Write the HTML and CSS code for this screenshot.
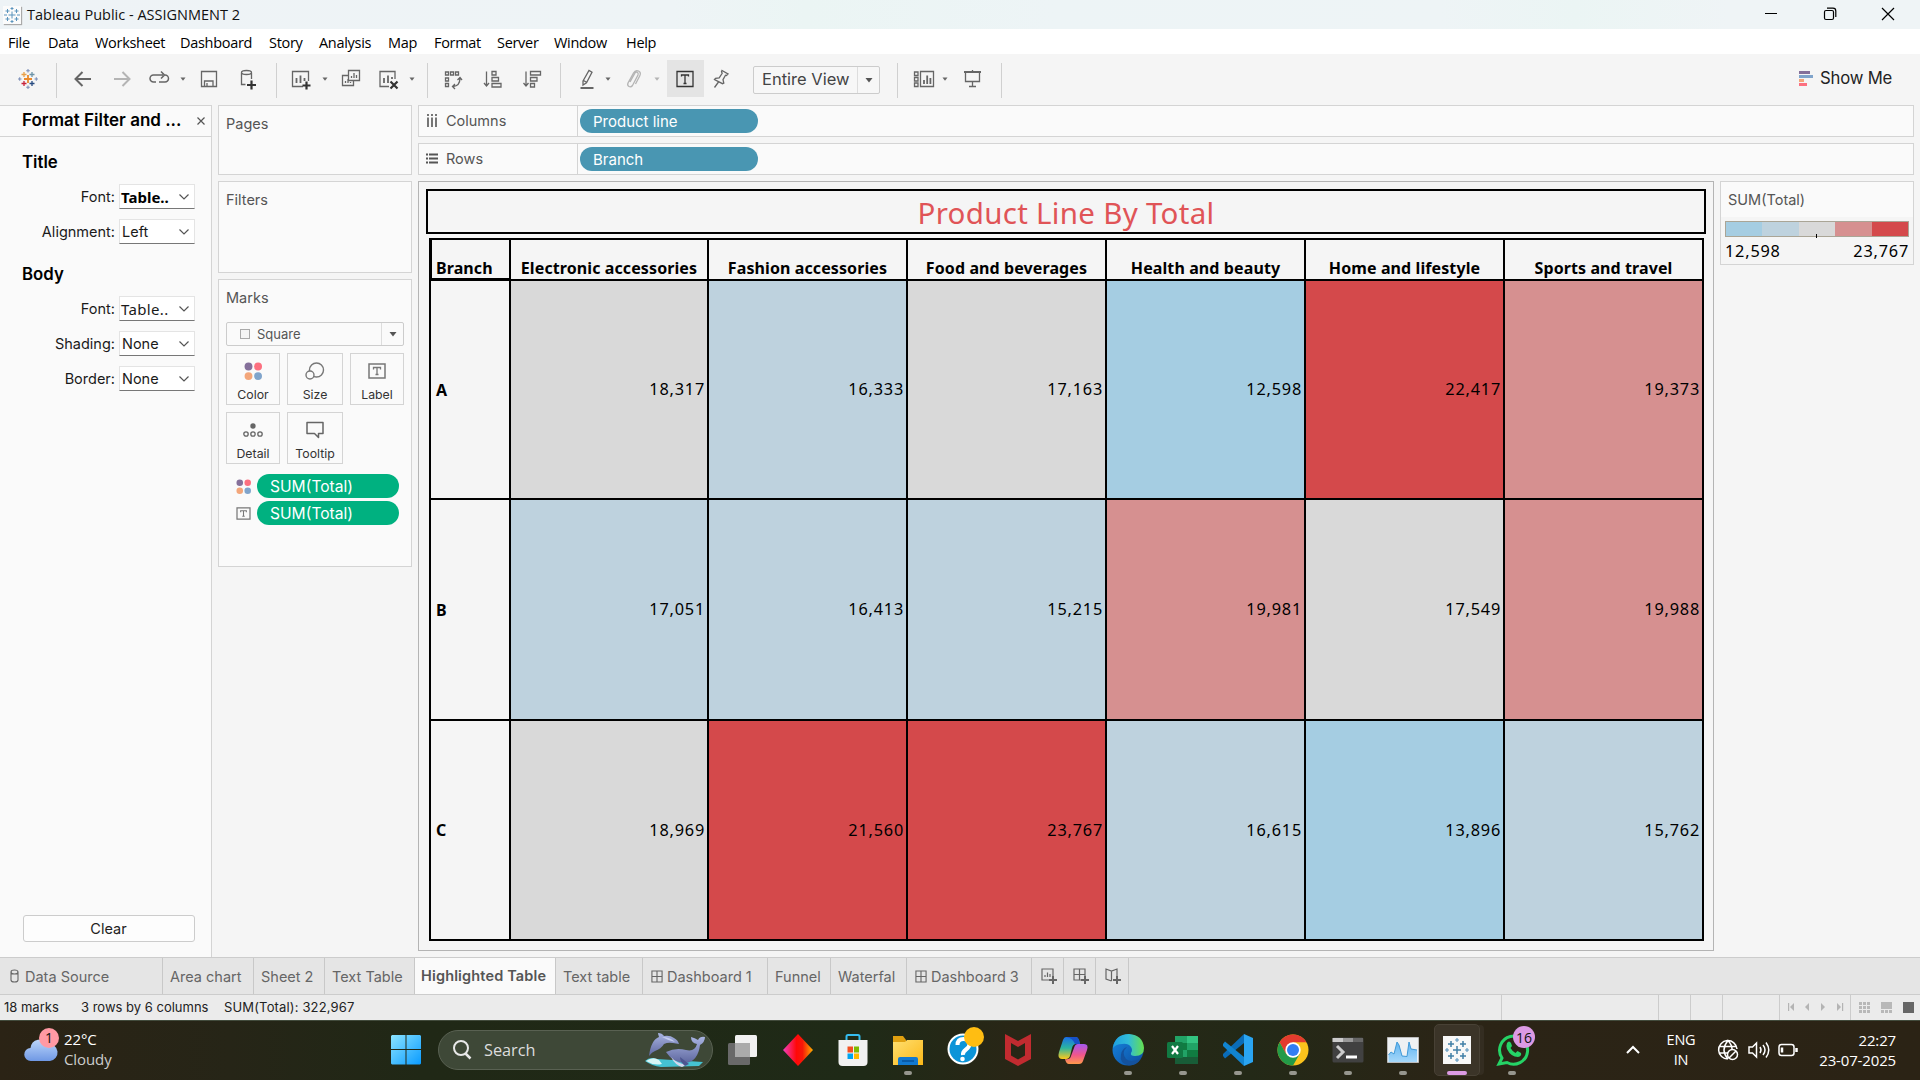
FILE: index.html
```html
<!DOCTYPE html>
<html lang="en">
<head>
<meta charset="utf-8">
<title>Tableau Public - ASSIGNMENT 2</title>
<link rel="stylesheet" href="styles.css">
</head>
<body>
<svg class="defs" aria-hidden="true">
  <defs>
    <linearGradient id="win" x1="0" y1="0" x2="1" y2="1"><stop offset="0" stop-color="#8be4ff"/><stop offset="1" stop-color="#0a9bff"/></linearGradient>
    <linearGradient id="cloud" x1="0" y1="0" x2="0" y2="1"><stop offset="0" stop-color="#bcd6fb"/><stop offset="1" stop-color="#6f98e4"/></linearGradient>
    <linearGradient id="diamond" x1="0" x2="1"><stop offset="0" stop-color="#ef3fc0"/><stop offset=".45" stop-color="#ff0808"/><stop offset=".65" stop-color="#f81808"/><stop offset="1" stop-color="#ffb000"/></linearGradient>
    <linearGradient id="folder" x1="0" y1="0" x2="1" y2="1"><stop offset="0" stop-color="#ffdf70"/><stop offset="1" stop-color="#fbb818"/></linearGradient>
    <linearGradient id="cpa" x1="0" y1="0" x2="0" y2="1"><stop offset="0" stop-color="#1a6fe8"/><stop offset=".5" stop-color="#2bb5a0"/><stop offset="1" stop-color="#ffc91a"/></linearGradient>
    <linearGradient id="cpb" x1="0" y1="0" x2="0" y2="1"><stop offset="0" stop-color="#a558f0"/><stop offset=".55" stop-color="#f0568c"/><stop offset="1" stop-color="#ff9a4a"/></linearGradient>
    <linearGradient id="edgea" x1="0" y1="0" x2="1" y2="0"><stop offset="0" stop-color="#1e9fe0"/><stop offset=".5" stop-color="#31bcd8"/><stop offset="1" stop-color="#66e04e"/></linearGradient>
    <linearGradient id="edgeb" x1="0" y1="0" x2="1" y2="1"><stop offset="0" stop-color="#1686e0"/><stop offset="1" stop-color="#0d4c9e"/></linearGradient>
    <linearGradient id="area" x1="0" y1="0" x2="0" y2="1"><stop offset="0" stop-color="#5fb4f0"/><stop offset="1" stop-color="#a6d8fa"/></linearGradient>
    <linearGradient id="dolphin" x1="0" y1="0" x2="0" y2="1"><stop offset="0" stop-color="#a9b4e2"/><stop offset="1" stop-color="#5e679f"/></linearGradient>
    <symbol id="caret" viewBox="0 0 8 24"><path d="M1.5 10.5h5L4 13.8z" fill="#666"/></symbol>
    <symbol id="chev" viewBox="0 0 12 12"><path d="M1.5 3.5 6 8l4.500-4.500" fill="none" stroke="#555" stroke-width="1.2"/></symbol>
    <symbol id="dots" viewBox="0 0 16 16"><circle cx="4" cy="4" r="3.500" fill="#85709a"/><circle cx="12.500" cy="4" r="3.500" fill="#fc7080"/><circle cx="4" cy="12.500" r="3.500" fill="#f3a67a"/><circle cx="12.500" cy="12.500" r="3.500" fill="#80a4cb"/></symbol>
    <symbol id="tbox" viewBox="0 0 18 16"><path d="M1 1h16v14H1z" fill="none" stroke="#777" stroke-width="1.500"/><path d="M5.500 6.500V4.500h7v2M9 4.500v7M7.500 11.500h3" fill="none" stroke="#777" stroke-width="1.300"/></symbol>
    <symbol id="grid4" viewBox="0 0 13 14"><path d="M1 1h11v12H1zM6.500 1v12M1 7h11" fill="none" stroke="#666" stroke-width="1.200"/></symbol>
  </defs>
</svg>

<header class="titlebar">
  <svg class="app-icon" width="18" height="18" viewBox="0 0 18 18"><rect width="18" height="18" fill="#fbfbfb"/><path d="M9 5.500v7M5.500 9h7M4.500 3v4M2.500 5h4M13.500 3v4M11.500 5h4M4.500 11v4M2.500 13h4M13.500 11v4M11.500 13h4M9 1v3M7.500 2.500h3M9 14v3M7.500 15.500h3M1 9h3M14 9h3" stroke="#5a94bd" fill="none"/></svg>
  <span class="app-title">Tableau Public - ASSIGNMENT 2</span>
  <div class="win-controls">
    <svg width="14" height="14" viewBox="0 0 14 14"><path d="M1 6.500h12" stroke="#000"/></svg>
    <svg width="14" height="14" viewBox="0 0 14 14"><rect x="1.500" y="3.500" width="9" height="9" rx="1.500" fill="none" stroke="#000" stroke-width="1.200"/><path d="M4 1.200h6q2.800 0 2.800 2.800v6" fill="none" stroke="#000" stroke-width="1.200"/></svg>
    <svg width="14" height="14" viewBox="0 0 14 14"><path d="M1 1l12 12M13 1 1 13" stroke="#000" stroke-width="1.200"/></svg>
  </div>
</header>

<nav class="menubar"><span>File</span><span>Data</span><span>Worksheet</span><span>Dashboard</span><span>Story</span><span>Analysis</span><span>Map</span><span>Format</span><span>Server</span><span>Window</span><span>Help</span></nav>

<div class="toolbar">
  <svg class="i" viewBox="0 0 24 24" fill="none" stroke-width="1.400"><path d="M12 8v8M8 12h8" stroke="#eb8a2c" stroke-width="1.800"/><path d="M8 5v5M5.500 7.500h5" stroke="#e8a04a"/><path d="M16 5v5M13.500 7.500h5" stroke="#6b93a8"/><path d="M8 14v5M5.500 16.500h5" stroke="#c8243c"/><path d="M16 14v5M13.500 16.500h5" stroke="#274a80"/><path d="M12 2v3.500M10.200 3.700h3.600M12 18.500V22M10.200 20.300h3.600M20.300 10.200v3.600M18.500 12H22M3.700 10.200v3.600M2 12h3.500" stroke="#7c8fb8" stroke-width="1.100"/></svg>
  <i class="sep"></i>
  <svg class="i" viewBox="0 0 24 24"><path d="M20 12H5M11.500 5 4.500 12l7 7" stroke-width="2"/></svg>
  <svg class="i faded" viewBox="0 0 24 24"><path d="M4 12h15M12.500 5l7 7-7 7" stroke-width="2"/></svg>
  <svg class="i" viewBox="0 0 24 24"><path d="M9 15H6.500a3.500 3.500 0 0 1 0-7H16M14 4.500 17.500 8 14 11.500M17.500 8h.5a3.500 3.500 0 0 1 0 7h-6" stroke-width="1.500"/></svg>
  <svg class="c"><use href="#caret"/></svg>
  <svg class="i" viewBox="0 0 24 24"><path d="M4.500 4.500h15v15h-15zM7.500 19v-5h8.500v5M10 19v-3"/></svg>
  <svg class="i" viewBox="0 0 24 24"><path d="M6.500 6v11.500h4M16.500 6v6"/><ellipse cx="11.500" cy="5.500" rx="5" ry="2"/><path d="M16.500 13.500v9M12 18h9" stroke="#333" stroke-width="2.200"/></svg>
  <i class="sep"></i>
  <svg class="i" viewBox="0 0 24 24"><path d="M14 19.500H3.500v-15h16V14"/><path d="M7.500 16v-5M11.500 16V8.500M15.500 14v-3" stroke-width="1.800"/><path d="M17.500 14.500v8M13.500 18.500h8" stroke="#333" stroke-width="2.200"/></svg>
  <svg class="c"><use href="#caret"/></svg>
  <svg class="i" viewBox="0 0 24 24"><path d="M9.500 3.500h11v10h-11zM9 8.500H3.500v10h11V14M12.500 11V9M15 11V6M17.500 11V8M6.500 16v-2M9 16v-4M11.500 16v-1"/></svg>
  <svg class="i" viewBox="0 0 24 24"><path d="M12 19.500H3v-15h15V12"/><path d="M7 16v-5M11 16V8.500M15 12v-2" stroke-width="1.800"/><path d="m13.500 14.500 7 7M20.500 14.500l-7 7" stroke="#333" stroke-width="2.200"/></svg>
  <svg class="c"><use href="#caret"/></svg>
  <i class="sep"></i>
  <svg class="i" viewBox="0 0 24 24"><path d="M4.500 5h3v3h-3zM9.500 5h3v3h-3zM14.500 5h3v3h-3zM4.500 11h3v3h-3zM4.500 16.500h3v3h-3zM19 11q0 8-7 8.500M16.500 13l2.500-2.500 2 2.500M14 17l-2.500 2.500L14 22"/></svg>
  <svg class="i" viewBox="0 0 24 24"><path d="M6.500 4.500V19M4 16l2.500 3L9 16M12 4.500h4V8h-4zM12 10.500h6.500V14H12zM12 16.500h9v3.500h-9z"/></svg>
  <svg class="i" viewBox="0 0 24 24"><path d="M6 4.500V19M3.500 16 6 19l2.500-3M10.500 4.500h10V8h-10zM10.500 10.500H17V14h-6.500zM10.500 16.500h4V20h-4z"/></svg>
  <i class="sep"></i>
  <svg class="i" viewBox="0 0 24 24"><path d="m8 14 6-10.500 3 1.800-5.500 10.500L8 18zM8.500 13.500l3 1.800"/><path d="M5.500 21h13" stroke-width="2"/></svg>
  <svg class="c"><use href="#caret"/></svg>
  <svg class="i faded" viewBox="0 0 24 24"><path d="m9 15 5-9q1-1.500 2.300-.8T17 8l-5.500 10.500q-1.500 2-3.500 1t-1-3.500L12.500 6q2-3.500 5-2t1.200 5L14.500 17"/></svg>
  <svg class="c faded"><use href="#caret"/></svg>
  <span class="pressed"><svg class="i dark" viewBox="0 0 24 24"><path d="M4 4.500h16v15H4zM8.500 9.500V8h7v1.500M12 8v8.500M10.500 16.500h3"/></svg></span>
  <svg class="i" viewBox="0 0 24 24"><path d="m13 3.500 6 3.500-1.500 1.500-1-.3-2.500 4.500.8 3.500-1.300.5L5.500 12.500l1-1.200 3.700-.5 3-4.500-.7-1.500zM9.500 15 5.500 20.500"/></svg>
  <div class="fit"><span>Entire View</span><b><svg width="10" height="8" viewBox="0 0 10 8"><path d="M1.500 2h7L5 6.500z" fill="#555"/></svg></b></div>
  <i class="sep"></i>
  <svg class="i" viewBox="0 0 24 24"><path d="M8.500 4.500h13v15h-13zM2.500 5h3.500v3.500H2.500zM2.500 10.500h3.500V14H2.500zM2.500 16h3.500v3.500H2.500z"/><path d="M12 17v-4M15.200 17V8.500M18.400 17v-6" stroke-width="1.800"/></svg>
  <svg class="c"><use href="#caret"/></svg>
  <svg class="i" viewBox="0 0 24 24"><path d="M4 5h17" stroke-width="2"/><path d="M5.500 5v9.500h14V5M12.500 3v2M12.500 14.500v5M9 19.500h7"/></svg>
  <i class="sep"></i>
  <div class="showme"><svg width="16" height="16" viewBox="0 0 16 16"><path d="M1 1h11v3H1z" fill="#85709a"/><path d="M1 5h14v3H1z" fill="#80a4cb"/><path d="M1 9h5v3H1z" fill="#f3a67a"/><path d="M1 13h8v3H1z" fill="#fc7080"/></svg><span>Show Me</span></div>
</div>

<main class="work">
  <aside class="format">
    <div class="format-head"><span>Format Filter and ...</span><svg width="10" height="10" viewBox="0 0 10 10"><path d="m1.500 1.500 7 7M8.500 1.500l-7 7" stroke="#555" stroke-width="1.200"/></svg></div>
    <h3>Title</h3>
    <div class="frow"><label>Font:</label><div class="sel bold">Table..<svg><use href="#chev"/></svg></div></div>
    <div class="frow"><label>Alignment:</label><div class="sel">Left<svg><use href="#chev"/></svg></div></div>
    <h3 class="second">Body</h3>
    <div class="frow"><label>Font:</label><div class="sel tab-font">Table..<svg><use href="#chev"/></svg></div></div>
    <div class="frow"><label>Shading:</label><div class="sel">None<svg><use href="#chev"/></svg></div></div>
    <div class="frow"><label>Border:</label><div class="sel">None<svg><use href="#chev"/></svg></div></div>
    <button class="clear">Clear</button>
  </aside>

  <section class="cards">
    <div class="card pages">Pages</div>
    <div class="card filters">Filters</div>
    <div class="card marks">
      <div>Marks</div>
      <div class="mark-type"><i></i><span>Square</span><b><svg width="10" height="8" viewBox="0 0 10 8"><path d="M1.500 2h7L5 6.500z" fill="#555"/></svg></b></div>
      <div class="mark-grid">
        <div><svg width="18" height="18"><use href="#dots"/></svg>Color</div>
        <div><svg width="20" height="18" viewBox="0 0 20 18" fill="none" stroke="#777" stroke-width="1.400"><circle cx="11.500" cy="8" r="7"/><circle cx="5" cy="13" r="4" fill="#fafafa"/></svg>Size</div>
        <div><svg width="18" height="16"><use href="#tbox"/></svg>Label</div>
        <div><svg width="20" height="16" viewBox="0 0 20 16" fill="none" stroke="#666" stroke-width="1.300"><circle cx="10" cy="4" r="2.700" fill="#666" stroke="none"/><circle cx="3" cy="12" r="2.200"/><circle cx="10" cy="12" r="2.200"/><circle cx="17" cy="12" r="2.200"/></svg>Detail</div>
        <div><svg width="20" height="18" viewBox="0 0 20 18" fill="none" stroke="#666" stroke-width="1.500"><path d="M2 1.500h16v11h-4.500v4l-4-4H2z" stroke-linejoin="round"/></svg>Tooltip</div>
      </div>
      <div class="mark-pill"><svg width="15" height="15"><use href="#dots"/></svg><span class="pill green">SUM(Total)</span></div>
      <div class="mark-pill"><svg width="14" height="13"><use href="#tbox"/></svg><span class="pill green">SUM(Total)</span></div>
    </div>
  </section>

  <section class="sheet">
    <div class="shelf"><div class="shelf-name"><svg width="12" height="13" viewBox="0 0 12 13"><path d="M2 0v2M6 0v2M10 0v2M2 3.500V13M6 3.500V13M10 3.500V13" stroke="#555" stroke-width="1.600"/></svg><span>Columns</span></div><span class="pill blue">Product line</span></div>
    <div class="shelf"><div class="shelf-name"><svg width="12" height="11" viewBox="0 0 12 11"><path d="M0 1.500h2M0 5.500h2M0 9.500h2M3 1.500h9M3 5.500h9M3 9.500h9" stroke="#555" stroke-width="2"/></svg><span>Rows</span></div><span class="pill blue">Branch</span></div>
    <div class="view-row">
      <div class="view">
        <h1>Product Line By Total</h1>
        <div class="xtab">
          <div class="h branch">Branch</div><div class="h">Electronic accessories</div><div class="h">Fashion accessories</div><div class="h">Food and beverages</div><div class="h">Health and beauty</div><div class="h">Home and lifestyle</div><div class="h">Sports and travel</div>
          <div class="r">A</div><div class="v q3">18,317</div><div class="v q2">16,333</div><div class="v q3">17,163</div><div class="v q1">12,598</div><div class="v q5">22,417</div><div class="v q4">19,373</div>
          <div class="r">B</div><div class="v q2">17,051</div><div class="v q2">16,413</div><div class="v q2">15,215</div><div class="v q4">19,981</div><div class="v q3">17,549</div><div class="v q4">19,988</div>
          <div class="r">C</div><div class="v q3">18,969</div><div class="v q5">21,560</div><div class="v q5">23,767</div><div class="v q2">16,615</div><div class="v q1">13,896</div><div class="v q2">15,762</div>
        </div>
      </div>
      <div class="legend">
        <div class="legend-title">SUM(Total)</div>
        <div class="ramp"><i class="q1"></i><i class="q2"></i><i class="q3"></i><i class="q4"></i><i class="q5"></i></div>
        <div class="ends"><span>12,598</span><span>23,767</span></div>
      </div>
    </div>
  </section>
</main>

<div class="tabs">
  <div class="tab src"><svg width="9" height="14" viewBox="0 0 9 14"><path d="M1 3v8q0 2 3.500 2T8 11V3q0-2-3.500-2T1 3zq0 2 3.500 2T8 3" fill="none" stroke="#666" stroke-width="1.100"/></svg>Data Source</div>
  <div class="tab">Area chart</div>
  <div class="tab">Sheet 2</div>
  <div class="tab">Text Table</div>
  <div class="tab active">Highlighted Table</div>
  <div class="tab">Text table</div>
  <div class="tab"><svg width="12" height="13"><use href="#grid4"/></svg>Dashboard 1</div>
  <div class="tab">Funnel</div>
  <div class="tab">Waterfal</div>
  <div class="tab"><svg width="12" height="13"><use href="#grid4"/></svg>Dashboard 3</div>
  <div class="tab new"><svg width="18" height="18" viewBox="0 0 18 18" fill="none" stroke="#666" stroke-width="1.200"><path d="M9 13H2V2h11v7M5 10V8M7.500 10V5.500M10 10V7"/><path d="M13 9v8M9 13h8" stroke-width="2"/></svg></div>
  <div class="tab new"><svg width="18" height="18" viewBox="0 0 18 18" fill="none" stroke="#666" stroke-width="1.200"><path d="M9 13H2V2h11v7M7.500 2v11M2 7.500h11"/><path d="M13 9v8M9 13h8" stroke-width="2"/></svg></div>
  <div class="tab new"><svg width="18" height="18" viewBox="0 0 18 18" fill="none" stroke="#666" stroke-width="1.200"><path d="M7.500 14 2 12V2l5.500 2L13 2v7M7.500 4v10"/><path d="M13 9v8M9 13h8" stroke-width="2"/></svg></div>
  <div class="tab rest"></div>
</div>

<div class="status">
  <span>18 marks</span><span>3 rows by 6 columns</span><span>SUM(Total): 322,967</span>
  <div></div><div></div><div></div><div></div>
  <div class="pager">
    <svg width="60" height="10" viewBox="0 0 60 10" fill="#b4b4b4"><path d="M1 1h1.200v8H1zM7 1v8L3 5zM22 1v8l-4-4zM34 1v8l4-4zM50 1v8l4-4zM55 1h1.200v8H55z"/></svg>
  </div>
  <div class="views">
    <svg width="55" height="12" viewBox="0 0 55 12" fill="#b8b8b8"><path d="M0 0h3v3H0zM4 0h3v3H4zM8 0h3v3H8zM0 4h3v3H0zM4 4h3v3H4zM8 4h3v3H8zM0 8h3v3H0zM4 8h3v3H4zM8 8h3v3H8zM22 0h11v7H22zM22 8h3v3h-3zM26 8h3v3h-3zM30 8h3v3h-3z"/><path d="M44 0h11v11H44z" fill="#666"/></svg>
  </div>
</div>

<footer class="taskbar">
  <div class="weather">
    <svg width="36" height="42" viewBox="0 0 36 42"><path d="M7 37a6.500 6.500 0 0 1-.5-13A9.500 9.500 0 0 1 24 20a8 8 0 0 1 2 17z" fill="url(#cloud)" transform="translate(0 -1)"/><circle cx="25" cy="13" r="10" fill="#ff99a4"/><text x="25" y="18" text-anchor="middle" class="badge-text">1</text></svg>
    <div><span>22°C</span><span class="dim">Cloudy</span></div>
  </div>
  <svg class="start" width="30" height="30" viewBox="0 0 30 30" fill="url(#win)"><path d="M1 0h13.500v14H0V1zM15.500 0H29l1 1v13H15.500zM0 15h14.500v14.500H1l-1-1zM15.500 15H30v13.500l-1 1H15.500z"/></svg>
  <div class="search">
    <svg width="20" height="22" viewBox="0 0 20 22" fill="none" stroke="#e8e8e8" stroke-width="2"><circle cx="9" cy="9" r="7"/><path d="m13.500 14.500 5 5" stroke-width="2.500"/></svg>
    <span>Search</span>
    <svg width="60" height="36" viewBox="0 0 60 36"><path d="M0 29q5-5 12-2l46 3-4 4-38 1q-9-1-16-6z" fill="#45c2d2"/><path d="M1 29q7-5 13-1l3 4q-8 2-16-3z" fill="#d8f5f4"/><path d="M4 24Q6 8 14 5q-1-3-1-4 4 0 6 3 6-1 10 2 4 2 5 6l-6-1q-5-1-9 1-3 5-9 7-3 1-6 5z" fill="url(#dolphin)"/><path d="M17 5q8 0 13 5-8-2-13-5z" fill="#c4cdf0"/><path d="M21 20q10-5 20-2 9 2 11-6-6-1-6-7 4 1 7 3 2-4 7-3 0 5-5 8-2 16-14 18-13 0-20-11z" fill="url(#dolphin)"/><path d="M26 25q7 8 17 7l-6 3q-7-2-11-10z" fill="#d4d8ee"/><path d="m35 25 9 7-4 2q-5-4-5-9z" fill="#4d5590"/></svg>
  </div>
  <div class="apps">
    <div><svg width="32" height="32" viewBox="0 0 32 32"><rect x="1" y="9" width="22" height="22" rx="1.500" fill="#696969"/><rect x="8" y="1" width="22" height="22" rx="1.500" fill="#f1f1f1"/><path d="M8 9h15v14H8z" fill="#ababab"/></svg></div>
    <div><svg width="32" height="32" viewBox="0 0 32 32"><path d="m16 0 15 16-15 16L1 16z" fill="url(#diamond)"/></svg></div>
    <div><svg width="32" height="32" viewBox="0 0 32 32"><path d="M9.500 7V2.500Q9.500 1 11 1h10q1.500 0 1.500 1.500V7" fill="none" stroke="#35bdf0" stroke-width="2"/><path d="M1.500 6h29v22q0 4-4 4h-21q-4 0-4-4z" fill="#f1f1f1"/><path d="M10.500 12.500H16v6h-5.500z" fill="#f25022"/><path d="M17 12.500h5v6h-5z" fill="#7fba00"/><path d="M10.500 19.500H16V25h-5.500z" fill="#00a4ef"/><path d="M17 19.500h5V25h-5z" fill="#ffb900"/></svg></div>
    <div class="run"><svg width="32" height="32" viewBox="0 0 32 32"><path d="M1 2h10l3 4v8H1z" fill="#e0a010"/><path d="M1 8h12l2-2h16v25H1z" fill="url(#folder)"/><path d="M6 31v-6q0-2 2-2h16q2 0 2 2v6z" fill="#1279d0"/><path d="M10 27h12" stroke="#07539c" stroke-width="1.500"/></svg></div>
    <div><svg width="38" height="42" viewBox="0 0 38 42"><circle cx="16" cy="24" r="15.500" fill="#fff"/><circle cx="16" cy="24" r="13.500" fill="#0b94d8"/><path d="M10.500 20q0-6 6-6t6 5q0 3-3.500 5.500T16 30" fill="none" stroke="#fff" stroke-width="4"/><circle cx="15.500" cy="34" r="2.300" fill="#fff"/><circle cx="27" cy="12" r="10" fill="#ffbd12"/></svg></div>
    <div><svg width="30" height="34" viewBox="0 0 30 34"><path d="m2 1 13 7 13-7v25l-13 7-13-7zM8 10v12.500l7 4 7-4V10l-7 4z" fill="#c22b30" fill-rule="evenodd"/></svg></div>
    <div><svg width="32" height="32" viewBox="0 0 32 32"><path d="M9 3h10q2 0 3 3l1 4h-4q-3 0-4 4l-2 8q-1 3-4 3H5q-5 0-3-7L6 6q1-3 3-3z" fill="url(#cpa)"/><path d="M9 3h10q2 0 3 3l1 4h-5q-2-6-9-7z" fill="#1751c8"/><path d="M21 10h6q5 0 3 6l-4 11q-1 3-4 3H12q-3 0-4-5 5 1 6-3l3-8q1-4 4-4z" fill="url(#cpb)"/></svg></div>
    <div class="run"><svg width="32" height="34" viewBox="0 0 32 34"><circle cx="16" cy="17" r="15.500" fill="url(#edgeb)"/><path d="M1 15Q3 1 17 1q14 1 15 14 0 8-9 8-5 0-4-3 2-3 0-6-3-4-9-3-6 0-9 4z" fill="url(#edgea)"/><path d="M15 14q-6 5-1 12 5 4 15-.5-4 7-12 7-10-2-8-11 1-6 6-7.500z" fill="#14529d"/></svg></div>
    <div class="run"><svg width="32" height="32" viewBox="0 0 32 32"><path d="M8 2h23v28H8z" fill="#21a366"/><path d="M20 2h11v7H20z" fill="#33c481"/><path d="M8 9h12v7H8z" fill="#107c41"/><path d="M20 16h11v7H20z" fill="#107c41"/><path d="M8 23h23v7H8z" fill="#185c37"/><rect x="0" y="8" width="16" height="16" rx="1.500" fill="#117a43"/><path d="m5 12 6 8M11 12l-6 8" stroke="#fff" stroke-width="2.200"/></svg></div>
    <div class="run"><svg width="32" height="34" viewBox="0 0 32 34"><path d="M22 1v9L3 25.500 1 23l0-2z" fill="#0a6cb8"/><path d="M22 33v-9L3 8.500 1 11v2z" fill="#1184d0"/><path d="m22 1 9 4v24l-9 4z" fill="#2aa5f2"/></svg></div>
    <div class="run"><svg width="32" height="34" viewBox="0 0 32 34"><circle cx="16" cy="17" r="15.500" fill="#fbc31c"/><path d="M2.600 9.200A15.500 15.500 0 0 1 29.500 9.200H16l-6.800 12z" fill="#e33b2e"/><path d="M2.600 9.200A15.500 15.500 0 0 0 16 32.500l6.800-11.700-13.500.5z" fill="#239a48"/><circle cx="16" cy="17" r="7.700" fill="#fff"/><circle cx="16" cy="17" r="6" fill="#317ef2"/></svg></div>
    <div class="run"><svg width="32" height="26" viewBox="0 0 32 26"><rect x=".5" y=".5" width="31" height="25" rx="1.500" fill="#414141"/><path d="M.5 1h10.500v4H.5z" fill="#ccc"/><path d="M11 1h10v4H11z" fill="#999"/><path d="M21 1h10v4H21z" fill="#666"/><path d="m5 9 6 6-6 6" fill="none" stroke="#ccc" stroke-width="3"/><path d="M14 20h11" stroke="#fff" stroke-width="3"/></svg></div>
    <div class="run"><svg width="32" height="26" viewBox="0 0 32 26"><path d="M.5.500h31v25H.5z" fill="#eef1f3" stroke="#bbb"/><path d="M1.500 18 4 15l3 2 3-12 2 3 3 11 5 .5L22 5l2 7 6 1v12H1.500z" fill="url(#area)"/><path d="M1.500 18 4 15l3 2 3-12 2 3 3 11 5 .5L22 5l2 7 6 1" fill="none" stroke="#409ad8"/></svg></div>
    <div class="current"><svg width="28" height="28" viewBox="0 0 28 28"><path d="M0 0h28v28H0z" fill="#f8f8f8"/><path d="M14 10v8M10 14h8M8 5v6M5 8h6M20 5v6M17 8h6M8 17v6M5 20h6M20 17v6M17 20h6" stroke="#407fa6" stroke-width="1.500"/><path d="M14 2v4M12 4h4M14 22v4M12 24h4M4 12v4M2 14h4M24 12v4M22 14h4" stroke="#5a94bd" stroke-width="1.100"/></svg></div>
    <div class="run"><svg width="40" height="42" viewBox="0 0 40 42"><path d="M7 33A14 14 0 1 1 12 37.500L4 39z" fill="none" stroke="#25d366" stroke-width="3"/><path d="M12 18q2-3 4 0l1 3-1.500 2q2 3.500 5 5l2-2 3.500 2q1 3-3 4-7 0-11-8-1-4 0-6z" fill="#25d366"/><circle cx="29" cy="12" r="11" fill="#dc9ae4"/><text x="29" y="17.500" text-anchor="middle" class="badge-text">16</text></svg></div>
  </div>
  <svg class="up" width="16" height="10" viewBox="0 0 16 10"><path d="m2 8 6-6 6 6" fill="none" stroke="#fff" stroke-width="2"/></svg>
  <div class="lang"><span>ENG</span><span>IN</span></div>
  <svg class="tray" width="82" height="24" viewBox="0 0 82 24" fill="none" stroke="#fff" stroke-width="1.500"><path d="M11 21A9.200 9.200 0 1 1 20 11M11 21Q3 12 11 2.500 15 7 15 11M2 8.500h17.500M2 15h9"/><circle cx="15.500" cy="16.500" r="5"/><path d="m12 20 7-7M32 9v6h3.500l4 4V5l-4 4zM43 9q2 3 0 6M46 7q4 5 0 10M49 4.500q5.500 7.500 0 15"/><rect x="62" y="6.500" width="15" height="11" rx="2.500"/><path d="M65 9.500v5" stroke-width="2.500"/><path d="M79.500 10v4" stroke-width="2.500"/></svg>
  <div class="clock"><span>22:27</span><span>23-07-2025</span></div>
</footer>
</body>
</html>
```
FILE: styles.css
```css
* { box-sizing: border-box; }
body {
  margin: 0;
  width: 1920px;
  height: 1080px;
  overflow: hidden;
  display: flex;
  flex-direction: column;
  background: #f5f5f5;
  color: #333;
  font: 14.5px/1 Inter, "Liberation Sans", sans-serif;
}
svg { display: block; flex: none; }
.defs { position: absolute; width: 0; height: 0; }

/* window chrome */
.titlebar {
  height: 29px;
  flex: none;
  display: flex;
  align-items: center;
  padding: 0 25px 0 3px;
  background: linear-gradient(90deg, #eef3f6, #eef4f6 35%, #ebf5f4 42%, #edf4f6 55%, #eef4f6 75%, #ebf5f4 82%, #eff4f6 90%);
  color: #111;
}
.app-icon { box-shadow: 1px 1px 1px #aaa; }
.app-title { margin-left: 6px; font: 14.5px "Open Sans", sans-serif; letter-spacing: 0; }
.win-controls { margin-left: auto; margin-top: -1px; display: flex; gap: 44.5px; }
.menubar {
  height: 25px;
  flex: none;
  display: grid;
  grid-template-columns: 40px 47px 85px 89px 50px 69px 46px 63px 57px 72px auto;
  align-items: center;
  padding: 1px 0 0 8px;
  background: #fff;
  color: #000;
  font: 14.5px "Open Sans", sans-serif;
  letter-spacing: -.3px;
}

/* toolbar: each column starts at the left edge of its control */
.toolbar {
  height: 51px;
  flex: none;
  padding: 0 0 2px 16px;
  display: grid;
  grid-template-columns: 40px 15px 39px 37px 32px 18px 38px 41px 13px 32px 18px 38px 31px 19px 14px 39px 40px 40px 15px 29px 17px 32px 14px 42px 44px 144px 15px 29px 19px 41px 797px auto;
  align-items: center;
  justify-items: start;
  background: #f5f5f5;
}
.i { width: 24px; height: 24px; fill: none; stroke: #666; stroke-width: 1.3; }
.i.dark { stroke: #333; }
.c { width: 8px; height: 24px; }
.faded { opacity: .45; }
.sep { width: 1px; height: 35px; margin-top: 3px; background: #d0d0d0; }
.pressed { width: 37px; height: 37px; padding-right: 2px; display: grid; place-items: center; background: #e4e4e4; }
.fit {
  width: 127px;
  height: 28px;
  margin-top: 2px;
  display: flex;
  align-items: center;
  border: 1px solid #ccc;
  border-radius: 2px;
  background: #f7f7f7;
  font-size: 16.5px;
  color: #444;
}
.fit span { flex: 1; padding-left: 8px; white-space: nowrap; }
.fit b, .mark-type b { width: 22px; height: 100%; display: grid; place-items: center; border-left: 1px solid #ddd; }
.showme { display: flex; align-items: center; gap: 6px; font-size: 16.7px; letter-spacing: -.2px; color: #222; white-space: nowrap; }

/* work area */
.work { height: 852px; flex: none; display: flex; }
.format {
  width: 212px;
  height: 852px;
  display: flex;
  flex-direction: column;
  background: #fafafa;
  border: solid #d4d4d4;
  border-width: 1px 1px 0 0;
  color: #1a1a1a;
}
.format-head {
  height: 31px;
  flex: none;
  display: flex;
  align-items: center;
  justify-content: space-between;
  padding: 0 5px 1px 22px;
  border-bottom: 1px solid #d4d4d4;
  font-size: 17px;
  font-weight: 600;
  color: #000;
}
.format h3 { margin: 0; height: 47px; flex: none; padding: 17px 0 0 22px; font-size: 16.8px; font-weight: 600; color: #000; }
.format h3.second { height: 42px; padding-top: 12px; }
.frow { display: flex; align-items: center; height: 25px; flex: none; margin-bottom: 10px; }
.frow label { width: 119px; padding: 1px 4px 0 0; text-align: right; }
.sel {
  width: 76px;
  height: 25px;
  display: flex;
  align-items: center;
  justify-content: space-between;
  padding: 1px 4px 0 2px;
  background: #fff;
  border: 1px solid #e4e4e4;
  border-bottom-color: #777;
}
.sel svg { width: 12px; height: 12px; }
.sel.bold { font: 700 15px/1 "Noto Sans", sans-serif; color: #000; padding-left: 1px; }
.sel.tab-font { font: 15px/1 "Noto Sans", sans-serif; letter-spacing: .35px; padding-left: 1px; }
.clear {
  width: 172px;
  height: 27px;
  margin: auto 0 15px 22.500px;
  padding: 0;
  background: #fdfdfd;
  border: 1px solid #ccc;
  border-radius: 3px;
  font: 14.5px Inter, sans-serif;
  color: #222;
}

.cards { width: 194px; margin-left: 6px; display: flex; flex-direction: column; gap: 6px; }
.card { background: #fafafa; border: 1px solid #d4d4d4; padding: 10.500px 7px; color: #555; flex: none; }
.pages { height: 70px; }
.filters { height: 92px; }
.marks { height: 288px; }
.mark-type {
  height: 24px;
  margin-top: 17px;
  display: flex;
  align-items: center;
  border: 1px solid #ccc;
  border-radius: 2px;
  font-size: 13px;
}
.mark-type i { width: 10px; height: 10px; margin: 0 7px 0 13px; border: 1.500px solid #aaa; background: #f5f5f5; }
.mark-type span { flex: 1; padding-top: 1px; }
.mark-grid {
  margin: 7px 0 10px;
  display: grid;
  grid-template-columns: 54px 56px 54px;
  grid-auto-rows: 52px;
  gap: 7px;
}
.mark-grid div {
  display: grid;
  grid-template-rows: 33px 1fr;
  place-items: center;
  align-content: start;
  border: 1px solid #d4d4d4;
  font-size: 12.3px;
  color: #333;
}
.mark-grid div svg { margin-top: 1px; }
.mark-pill { display: flex; align-items: center; padding-left: 10px; margin-bottom: 3px; }
.mark-pill svg { width: 15px; margin-right: 6px; }
.pill { height: 24px; border-radius: 12px; color: #fff; padding: 5px 12px 0 13px; }
.green { width: 142px; background: #00b180; font-size: 15.6px; }
.blue { width: 178px; margin-left: 2px; background: #4996b2; font-size: 15px; }

.sheet { width: 1496px; margin-left: 6px; display: flex; flex-direction: column; }
.shelf { height: 32px; flex: none; margin-bottom: 6px; display: flex; align-items: center; background: #fafafa; border: 1px solid #d4d4d4; }
.shelf-name { width: 159px; height: 30px; display: flex; align-items: center; gap: 8px; padding-left: 7px; border-right: 1px solid #d4d4d4; color: #555; }
.shelf-name svg { margin-top: -2px; }
.shelf-name span { padding-top: 1px; }
.view-row { display: flex; align-items: flex-start; gap: 6px; }
.view { width: 1296px; height: 770px; padding: 7px; border: 1px solid #b4b4b4; }
.view h1 {
  margin: 0 0 4px;
  height: 45px;
  width: 1280px;
  border: 2px solid #000;
  text-align: center;
  font: 29.5px/43px "Noto Sans", sans-serif;
  letter-spacing: .3px;
  color: #e05457;
}
.xtab {
  width: 1275px;
  height: 703px;
  margin-left: 3px;
  display: grid;
  grid-template-columns: 78px 196px repeat(5, 197px);
  grid-template-rows: 39px 217px 219px 218px;
  gap: 2px;
  padding: 2px;
  background: #000;
  color: #000;
}
.xtab > div { display: flex; align-items: center; }
.h, .r { background: #f5f5f5; font: 700 16px "Noto Sans", sans-serif; }
.h { justify-content: center; padding-top: 16px; letter-spacing: .1px; white-space: nowrap; }
.h.branch { justify-content: flex-start; padding-left: 5px; box-shadow: inset 1px 0 #000, inset 0 -1px #000; }
.r { padding-left: 5px; }
.v { justify-content: flex-end; padding: 0 2px 1px 0; }
.v, .ends { font: 16.3px "Noto Sans", sans-serif; letter-spacing: .8px; }
.q1 { background: #a5cde2; }
.q2 { background: #bed2de; }
.q3 { background: #d9d9d9; }
.q4 { background: #d69090; }
.q5 { background: #d4494b; }

.legend { width: 194px; height: 84px; border: 1px solid #d4d4d4; }
.legend-title { height: 35px; padding: 11px 7px; background: #fafafa; color: #555; }
.ramp { position: relative; width: 184px; height: 16px; margin: 4px 0 0 4px; display: flex; border: 1px solid #aaa596; }
.ramp i { flex: 1; }
.ramp::after { content: ""; position: absolute; left: 90px; bottom: -2px; width: 1px; height: 4px; background: #000; }
.ends { display: flex; justify-content: space-between; padding: 3px 4px; color: #000; }

/* sheet tabs */
.tabs {
  height: 38px;
  flex: none;
  display: grid;
  grid-template-columns: 163px 91px 71px 90px 141px 87px 125px 63px 76px 125px 32px 32px 33px auto;
  border: solid #ccc;
  border-width: 1px 0;
  background: #e5e5e5;
  color: #666;
}
.tab { display: flex; align-items: center; justify-content: flex-start; gap: 4px; border-right: 1px solid #c8c8c8; padding: 3px 0 0 7px; white-space: nowrap; }
.tab svg { margin-top: -3px; }
.tab.src { padding-left: 10px; gap: 6px; }
.tab.active { background: #fafafa; font-weight: 600; color: #555; padding-top: 0; padding-left: 6px; letter-spacing: .15px; }
.tab.new { padding-left: 8px; }
.tab.rest { border: 0; }
.tab:nth-child(7), .tab:nth-child(10) { padding-left: 8px; }

.status {
  height: 25px;
  flex: none;
  display: grid;
  grid-template-columns: 77px 143px 1277px 157px 32px 32px 57px 71px auto;
  padding-left: 4px;
  align-items: center;
  background: #ebebeb;
  font-size: 13px;
  color: #222;
  white-space: nowrap;
}
.status span:nth-child(3) { letter-spacing: .15px; }
.status div { height: 25px; border-left: 1px solid #ccc; }
.status .pager { padding: 7px 0 0 7px; }
.status .views { padding: 7px 0 0 8px; }

/* desktop taskbar */
.taskbar {
  height: 60px;
  flex: none;
  display: flex;
  align-items: center;
  background: linear-gradient(90deg, #2b2315, #262517 12%, #202816 22%, #1f2a17 45%, #292616 53%, #232917 65%, #2b2416 76%, #2b2315);
  border-top: 1px solid #424b3c;
  color: #fff;
  font: 14.5px/24px "Open Sans", sans-serif;
}
.badge-text { font: 14px "Open Sans", sans-serif; fill: #111; }
.weather { width: 391px; padding-left: 24px; display: flex; align-items: center; }
.weather svg { margin-top: -9px; }
.weather div { display: grid; line-height: 20px; margin: -3px 0 0 4px; font-size: 15px; letter-spacing: -.1px; }
.dim { color: #ccc; }
.search {
  width: 275px;
  height: 40px;
  margin-left: 17px;
  display: flex;
  align-items: center;
  gap: 12px;
  padding: 0 7px 0 13px;
  border-radius: 20px;
  border: 1px solid #596152;
  background: #3e4837;
  color: #ddd;
  font-size: 16.3px;
}
.search span { flex: 1; }
.start, .search, .apps, .up, .lang, .tray, .clock { margin-top: -1px; }
.apps { display: flex; margin-left: 2px; }
.apps > div { position: relative; width: 55px; height: 59px; display: grid; place-items: center; }
.apps svg { grid-area: 1 / 1; }
.apps > div:nth-child(5) svg, .apps > div:nth-child(15) svg { margin: -8px -6px 0 0; }
.apps > div:nth-child(n+14) { margin-left: -1px; margin-right: 1px; }
.run::after, .current::after {
  content: "";
  position: absolute;
  bottom: 5px;
  left: 24px;
  width: 8px;
  height: 4px;
  border-radius: 2px;
  background: #96968e;
}
.current::after { left: 18px; width: 20px; background: #dc9ae4; }
.current::before {
  content: "";
  grid-area: 1 / 1;
  width: 44px;
  height: 50px;
  border-radius: 5px;
  background: #3b3428;
  border: 1px solid #484135;
  box-shadow: 5px 0 0 -1px #342d21;
}
.up { margin-left: 85px; }
.lang { width: 60px; margin-left: 10px; display: grid; line-height: 20px; text-align: center; letter-spacing: -.2px; }
.tray { margin-left: 6px; }
.clock { margin-left: auto; margin-right: 24px; display: grid; line-height: 20px; text-align: right; font-size: 15px; letter-spacing: -.15px; }
```
